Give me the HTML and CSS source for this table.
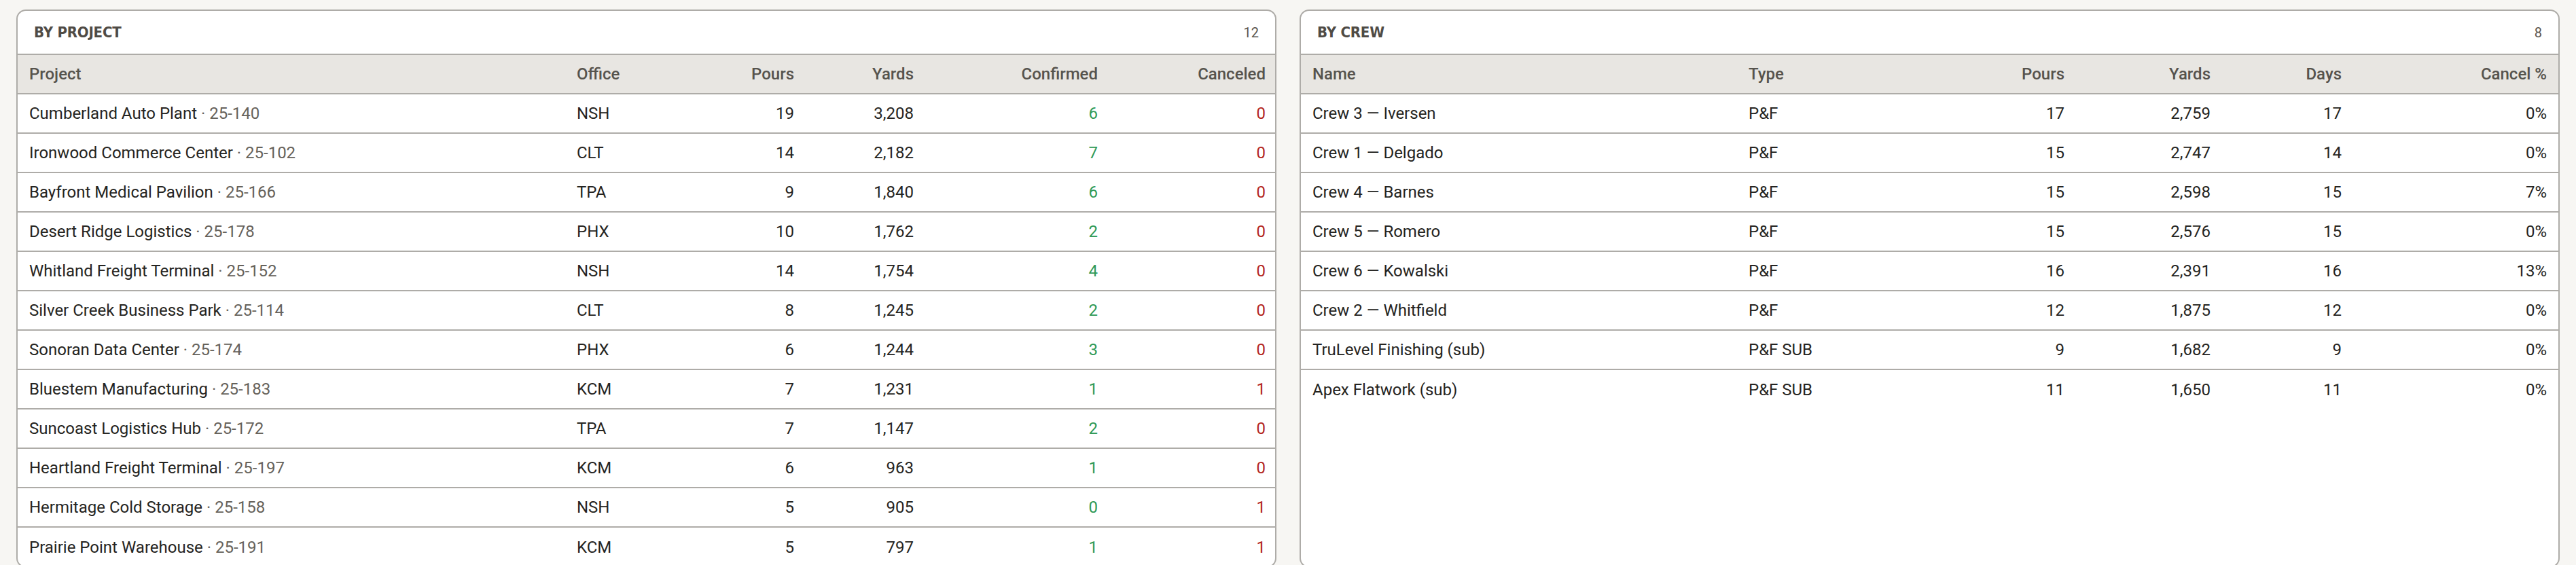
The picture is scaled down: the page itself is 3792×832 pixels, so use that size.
FILE: index.html
```html
<!DOCTYPE html>
<html lang="en">
<head>
<meta charset="utf-8">
<title>Pours summary</title>
<link rel="stylesheet" href="styles.css">
</head>
<body>
<main class="grid">
  <section class="card">
    <header class="card-head">
      <h2 class="card-title">BY PROJECT</h2>
      <span class="card-count">12</span>
    </header>
    <table class="tbl tbl-project">
      <colgroup>
        <col class="c-project"><col class="c-office"><col class="c-pours"><col class="c-yards"><col class="c-conf"><col class="c-canc">
      </colgroup>
      <thead>
        <tr><th>Project</th><th>Office</th><th class="num">Pours</th><th class="num">Yards</th><th class="num">Confirmed</th><th class="num">Canceled</th></tr>
      </thead>
      <tbody>
        <tr><td>Cumberland Auto Plant <span class="code">· 25-140</span></td><td>NSH</td><td class="num">19</td><td class="num">3,208</td><td class="num ok">6</td><td class="num bad">0</td></tr>
        <tr><td>Ironwood Commerce Center <span class="code">· 25-102</span></td><td>CLT</td><td class="num">14</td><td class="num">2,182</td><td class="num ok">7</td><td class="num bad">0</td></tr>
        <tr><td>Bayfront Medical Pavilion <span class="code">· 25-166</span></td><td>TPA</td><td class="num">9</td><td class="num">1,840</td><td class="num ok">6</td><td class="num bad">0</td></tr>
        <tr><td>Desert Ridge Logistics <span class="code">· 25-178</span></td><td>PHX</td><td class="num">10</td><td class="num">1,762</td><td class="num ok">2</td><td class="num bad">0</td></tr>
        <tr><td>Whitland Freight Terminal <span class="code">· 25-152</span></td><td>NSH</td><td class="num">14</td><td class="num">1,754</td><td class="num ok">4</td><td class="num bad">0</td></tr>
        <tr><td>Silver Creek Business Park <span class="code">· 25-114</span></td><td>CLT</td><td class="num">8</td><td class="num">1,245</td><td class="num ok">2</td><td class="num bad">0</td></tr>
        <tr><td>Sonoran Data Center <span class="code">· 25-174</span></td><td>PHX</td><td class="num">6</td><td class="num">1,244</td><td class="num ok">3</td><td class="num bad">0</td></tr>
        <tr><td>Bluestem Manufacturing <span class="code">· 25-183</span></td><td>KCM</td><td class="num">7</td><td class="num">1,231</td><td class="num ok">1</td><td class="num bad">1</td></tr>
        <tr><td>Suncoast Logistics Hub <span class="code">· 25-172</span></td><td>TPA</td><td class="num">7</td><td class="num">1,147</td><td class="num ok">2</td><td class="num bad">0</td></tr>
        <tr><td>Heartland Freight Terminal <span class="code">· 25-197</span></td><td>KCM</td><td class="num">6</td><td class="num">963</td><td class="num ok">1</td><td class="num bad">0</td></tr>
        <tr><td>Hermitage Cold Storage <span class="code">· 25-158</span></td><td>NSH</td><td class="num">5</td><td class="num">905</td><td class="num ok">0</td><td class="num bad">1</td></tr>
        <tr class="last"><td>Prairie Point Warehouse <span class="code">· 25-191</span></td><td>KCM</td><td class="num">5</td><td class="num">797</td><td class="num ok">1</td><td class="num bad">1</td></tr>
      </tbody>
    </table>
  </section>
  <section class="card">
    <header class="card-head">
      <h2 class="card-title">BY CREW</h2>
      <span class="card-count">8</span>
    </header>
    <table class="tbl tbl-crew">
      <colgroup>
        <col class="c-name"><col class="c-type"><col class="c-cpours"><col class="c-cyards"><col class="c-days"><col class="c-cpct">
      </colgroup>
      <thead>
        <tr><th>Name</th><th>Type</th><th class="num">Pours</th><th class="num">Yards</th><th class="num">Days</th><th class="num">Cancel %</th></tr>
      </thead>
      <tbody>
        <tr><td>Crew 3 — Iversen</td><td>P&amp;F</td><td class="num">17</td><td class="num">2,759</td><td class="num">17</td><td class="num">0%</td></tr>
        <tr><td>Crew 1 — Delgado</td><td>P&amp;F</td><td class="num">15</td><td class="num">2,747</td><td class="num">14</td><td class="num">0%</td></tr>
        <tr><td>Crew 4 — Barnes</td><td>P&amp;F</td><td class="num">15</td><td class="num">2,598</td><td class="num">15</td><td class="num">7%</td></tr>
        <tr><td>Crew 5 — Romero</td><td>P&amp;F</td><td class="num">15</td><td class="num">2,576</td><td class="num">15</td><td class="num">0%</td></tr>
        <tr><td>Crew 6 — Kowalski</td><td>P&amp;F</td><td class="num">16</td><td class="num">2,391</td><td class="num">16</td><td class="num">13%</td></tr>
        <tr><td>Crew 2 — Whitfield</td><td>P&amp;F</td><td class="num">12</td><td class="num">1,875</td><td class="num">12</td><td class="num">0%</td></tr>
        <tr><td>TruLevel Finishing (sub)</td><td>P&amp;F SUB</td><td class="num">9</td><td class="num">1,682</td><td class="num">9</td><td class="num">0%</td></tr>
        <tr class="last"><td>Apex Flatwork (sub)</td><td>P&amp;F SUB</td><td class="num">11</td><td class="num">1,650</td><td class="num">11</td><td class="num">0%</td></tr>
      </tbody>
    </table>
  </section>
</main>
</body>
</html>
```

FILE: styles.css
```css
* { box-sizing: border-box; }

html, body {
  margin: 0;
  background: #f7f6f3;
}

body {
  padding: 14px 24px 0;
  font-family: Roboto, "Noto Sans", sans-serif;
  color: #252421;
}

.grid {
  display: grid;
  grid-template-columns: 1fr 1fr;
  align-items: stretch;
  gap: 34px;
}

.card {
  background: #ffffff;
  border: 2px solid #aeaca8;
  border-radius: 14px;
  overflow: hidden;
}

.card-head {
  display: flex;
  align-items: center;
  justify-content: space-between;
  height: 65px;
  padding: 0 24px;
  border-bottom: 2px solid #aeaca8;
}

.card-title {
  margin: 0;
  font-family: "Liberation Sans Narrow", "DejaVu Sans Condensed", sans-serif;
  font-weight: 700;
  font-size: 22px;
  letter-spacing: -0.2px;
  color: #4f4b45;
}

.card-count {
  font-size: 20px;
  color: #5a5650;
}

.tbl {
  width: 100%;
  border-collapse: collapse;
  table-layout: fixed;
  font-size: 24px;
}

.tbl th {
  background: #e8e6e2;
  font-weight: 500;
  color: #56534d;
  text-align: left;
  height: 57px;
  padding: 0 17px;
  border-bottom: 2px solid #aeaca8;
}

.tbl td {
  height: 58px;
  padding: 0 17px;
  border-bottom: 2px solid #aeaca8;
  white-space: nowrap;
}

.tbl tr.last td { border-bottom: none; }

.tbl .num { text-align: right; }

.code { color: #66625b; }

.ok { color: #2f9a57; }
.bad { color: #b3261e; }

.c-project { width: 806px; }
.c-office { width: 177px; }
.c-pours { width: 177px; }
.c-yards { width: 176px; }
.c-conf { width: 271px; }
.c-canc { width: 247px; }

.c-name { width: 642px; }
.c-type { width: 300px; }
.c-cpours { width: 199px; }
.c-cyards { width: 215px; }
.c-days { width: 193px; }
.c-cpct { width: 302px; }
```
